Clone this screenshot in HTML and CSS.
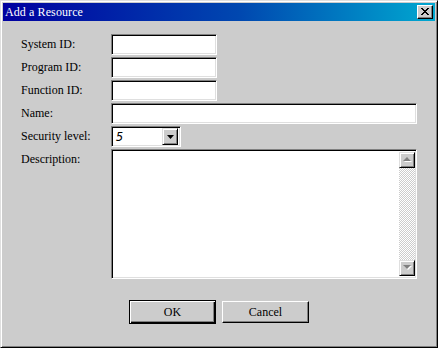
FILE: index.html
```html
<!DOCTYPE html>
<html lang="en">
<head>
    <meta charset="UTF-8">
    <meta name="viewport" content="width=device-width, initial-scale=1.0">
    <title>Add a Resource</title>
    <link rel="stylesheet" href="styles.css">
</head>
<body>
    <div class="window">
        <div class="titlebar">
            <span class="title">Add a Resource</span>
            <div class="close-btn">
                <svg width="8" height="7" viewBox="0 0 8 7">
                    <path d="M0 0h2v1h1v1h2v-1h1v-1h2v1h-1v1h-1v1h-1v1h1v1h1v1h1v1h-2v-1h-1v-1h-2v1h-1v1h-2v-1h1v-1h1v-1h1v-1h-1v-1h-1v-1h-1z" fill="#000"/>
                </svg>
            </div>
        </div>

        <div class="form">
            <label class="lbl">System ID:</label>
            <div class="field short"></div>

            <label class="lbl">Program ID:</label>
            <div class="field short"></div>

            <label class="lbl">Function ID:</label>
            <div class="field short"></div>

            <label class="lbl">Name:</label>
            <div class="field wide"></div>

            <label class="lbl">Security level:</label>
            <div class="select">
                <span class="select-value">5</span>
                <div class="select-btn">
                    <svg width="7" height="4" viewBox="0 0 7 4"><path d="M0 0h7l-3.5 4z" fill="#000"/></svg>
                </div>
            </div>

            <label class="lbl top">Description:</label>
            <div class="field memo">
                <div class="memo-text"></div>
                <div class="scrollbar">
                    <div class="sb-btn">
                        <svg width="9" height="6" viewBox="0 0 9 6">
                            <path d="M1 5h8l-4-4z" fill="#fff"/>
                            <path d="M0 4h8l-4-4z" fill="#808080"/>
                        </svg>
                    </div>
                    <div class="sb-track"></div>
                    <div class="sb-btn">
                        <svg width="9" height="6" viewBox="0 0 9 6">
                            <path d="M1 1h8l-4 4z" fill="#fff"/>
                            <path d="M0 0h8l-4 4z" fill="#808080"/>
                        </svg>
                    </div>
                </div>
            </div>
        </div>

        <div class="buttons">
            <button class="btn default">OK</button>
            <button class="btn">Cancel</button>
        </div>
    </div>
</body>
</html>
```

FILE: styles.css
```css
* {
    margin: 0;
    padding: 0;
    box-sizing: border-box;
}
body {
    background: #cccccc;
    font-family: "Liberation Serif", "DejaVu Serif", serif;
    font-size: 12px;
    color: #000;
}
.window {
    width: 438px;
    height: 348px;
    background: #cccccc;
    border-top: 1px solid #dfdfdf;
    border-left: 1px solid #dfdfdf;
    border-right: 1px solid #000;
    border-bottom: 1px solid #000;
    box-shadow: inset 1px 1px 0 #fff, inset -1px -1px 0 #808080;
    padding: 2px;
}
.titlebar {
    height: 18px;
    background: linear-gradient(to right, #0000a0, #0048b0 55%, #00a8d0);
    display: flex;
    align-items: center;
    justify-content: space-between;
    padding: 0 2px 0 2px;
}
.title {
    color: #fff;
    font-size: 12px;
    letter-spacing: 0.1px;
}
.close-btn {
    width: 16px;
    height: 14px;
    background: #cccccc;
    border-top: 1px solid #fff;
    border-left: 1px solid #fff;
    border-right: 1px solid #000;
    border-bottom: 1px solid #000;
    box-shadow: inset -1px -1px 0 #808080;
    display: flex;
    align-items: center;
    justify-content: center;
    padding-right: 1px;
    padding-bottom: 1px;
}
.form {
    display: grid;
    grid-template-columns: 90px 306px;
    row-gap: 2px;
    padding: 13px 0 0 18px;
}
.lbl {
    display: flex;
    align-items: center;
    white-space: nowrap;
}
.lbl.top {
    align-items: flex-start;
    padding-top: 3px;
}
.field {
    height: 21px;
    background: #fff;
    border-top: 1px solid #808080;
    border-left: 1px solid #808080;
    border-right: 1px solid #fff;
    border-bottom: 1px solid #fff;
    box-shadow: inset 1px 1px 0 #000, inset -1px -1px 0 #dfdfdf;
}
.field.short {
    width: 106px;
}
.field.wide {
    width: 306px;
}
.select {
    width: 70px;
    height: 21px;
    background: #fff;
    border-top: 1px solid #808080;
    border-left: 1px solid #808080;
    border-right: 1px solid #fff;
    border-bottom: 1px solid #fff;
    box-shadow: inset 1px 1px 0 #000, inset -1px -1px 0 #dfdfdf;
    display: flex;
    align-items: center;
    justify-content: space-between;
    padding: 2px 2px 2px 4px;
}
.select-value {
    font-family: "DejaVu Sans Mono", monospace;
    font-style: italic;
    font-size: 12px;
}
.select-btn {
    width: 16px;
    height: 17px;
    background: #cccccc;
    border-top: 1px solid #dfdfdf;
    border-left: 1px solid #dfdfdf;
    border-right: 1px solid #000;
    border-bottom: 1px solid #000;
    box-shadow: inset 1px 1px 0 #fff, inset -1px -1px 0 #808080;
    display: flex;
    align-items: center;
    justify-content: center;
}
.field.memo {
    width: 306px;
    height: 130px;
    display: flex;
    padding: 2px 1px 2px 2px;
}
.memo-text {
    flex: 1;
}
.scrollbar {
    width: 16px;
    display: flex;
    flex-direction: column;
}
.sb-btn {
    width: 16px;
    height: 16px;
    background: #cccccc;
    border-top: 1px solid #dfdfdf;
    border-left: 1px solid #dfdfdf;
    border-right: 1px solid #000;
    border-bottom: 1px solid #000;
    box-shadow: inset 1px 1px 0 #fff, inset -1px -1px 0 #808080;
    display: flex;
    align-items: center;
    justify-content: center;
}
.sb-track {
    flex: 1;
    background: repeating-conic-gradient(#fff 0 25%, #cccccc 0 50%) 0 0 / 2px 2px;
}
.buttons {
    display: flex;
    gap: 6px;
    padding: 0 0 0 126px;
    margin-top: 21px;
}
.btn {
    width: 87px;
    height: 22px;
    font-family: "Liberation Serif", "DejaVu Serif", serif;
    font-size: 12px;
    background: #cccccc;
    border-top: 1px solid #fff;
    border-left: 1px solid #fff;
    border-right: 1px solid #000;
    border-bottom: 1px solid #000;
    box-shadow: inset -1px -1px 0 #808080;
    margin-top: 1px;
}
.btn.default {
    height: 24px;
    margin-top: 0;
    border: 1px solid #000;
    box-shadow: inset 1px 1px 0 #fff, inset -1px -1px 0 #000, inset -2px -2px 0 #808080;
}
```
